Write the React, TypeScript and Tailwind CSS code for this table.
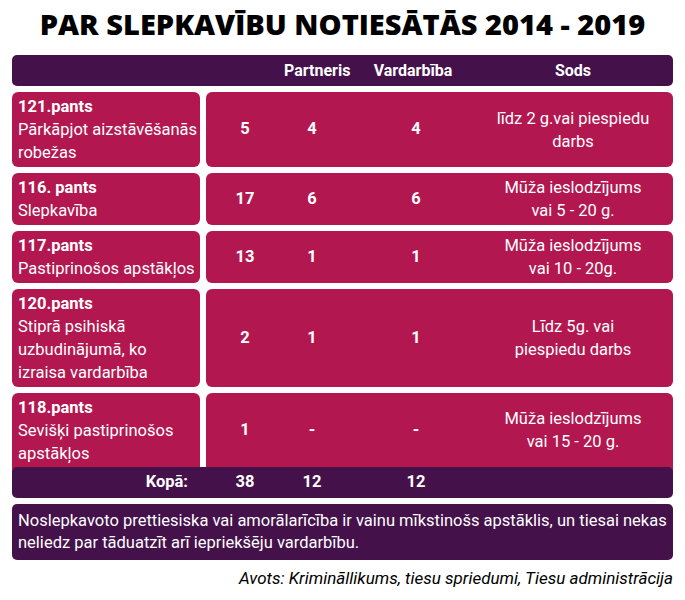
const rows = [
  {
    law: '121.pants',
    title: ['Pārkāpjot aizstāvēšanās', 'robežas'],
    total: '5',
    partner: '4',
    violence: '4',
    sentence: ['līdz 2 g.vai piespiedu', 'darbs'],
  },
  {
    law: '116. pants',
    title: ['Slepkavība'],
    total: '17',
    partner: '6',
    violence: '6',
    sentence: ['Mūža ieslodzījums', 'vai 5 - 20 g.'],
  },
  {
    law: '117.pants',
    title: ['Pastiprinošos apstākļos'],
    total: '13',
    partner: '1',
    violence: '1',
    sentence: ['Mūža ieslodzījums', 'vai 10 - 20g.'],
  },
  {
    law: '120.pants',
    title: ['Stiprā psihiskā', 'uzbudinājumā, ko', 'izraisa vardarbība'],
    total: '2',
    partner: '1',
    violence: '1',
    sentence: ['Līdz 5g. vai', 'piespiedu darbs'],
  },
  {
    law: '118.pants',
    title: ['Sevišķi pastiprinošos', 'apstākļos'],
    total: '1',
    partner: '-',
    violence: '-',
    sentence: ['Mūža ieslodzījums', 'vai 15 - 20 g.'],
  },
];

const App = () => {
  return (
    <div className="w-[685px] h-[600px] bg-white font-['Roboto',sans-serif] text-white overflow-hidden">
      {/* Title */}
      <h1 className="pt-[5px] text-center font-['Open_Sans',sans-serif] text-[29px] leading-[38px] font-extrabold text-black">
        PAR SLEPKAVĪBU NOTIESĀTĀS 2014 - 2019
      </h1>

      <div className="mt-[12px] px-[12px]">
        {/* Header */}
        <div className="grid h-[31px] grid-cols-[194px_78px_56px_152px_162px] items-center rounded-[5px] bg-[#44114b] text-[16px] font-bold">
          <div />
          <div />
          <div className="text-center">Partneris</div>
          <div className="text-center -ml-[6px]">Vardarbība</div>
          <div className="text-center">Sods</div>
        </div>

        {/* Rows */}
        <div className="mt-[6px] flex flex-col gap-[6px]">
          {rows.map((row, i) => {
            const last = i === rows.length - 1;
            return (
              <div key={row.law} className="flex gap-[6px]">
                <div
                  className={`w-[188px] bg-[#b3174f] pl-[6px] pr-[1px] pt-[3px] text-[16.5px] leading-[23px] ${
                    last ? 'rounded-t-[6px] pb-[8px]' : 'rounded-[6px] pb-[3px]'
                  }`}
                >
                  <div className="font-bold">{row.law}</div>
                  {row.title.map((t) => (
                    <div key={t}>{t}</div>
                  ))}
                </div>
                <div
                  className={`grid flex-1 grid-cols-[78px_56px_152px_162px] items-center bg-[#b3174f] text-[16.5px] ${
                    last ? 'rounded-t-[6px] pb-[6px]' : 'rounded-[6px]'
                  }`}
                >
                  <div className="text-center font-bold">{row.total}</div>
                  <div className="text-center font-bold">{row.partner}</div>
                  <div className="text-center font-bold">{row.violence}</div>
                  <div className="text-center leading-[23px]">
                    {row.sentence.map((s) => (
                      <div key={s}>{s}</div>
                    ))}
                  </div>
                </div>
              </div>
            );
          })}
        </div>

        {/* Total */}
        <div className="relative -mt-[6px] grid h-[31px] grid-cols-[194px_78px_56px_152px_162px] items-center rounded-[5px] bg-[#44114b] text-[16.5px] font-bold">
          <div className="pr-[18px] text-right">Kopā:</div>
          <div className="text-center">38</div>
          <div className="text-center">12</div>
          <div className="text-center">12</div>
          <div />
        </div>

        {/* Note */}
        <div className="mt-[6px] rounded-[5px] bg-[#44114b] px-[6px] py-[6px] text-[16.5px] leading-[22px]">
          Noslepkavoto prettiesiska vai amorālarīcība ir vainu mīkstinošs apstāklis, un tiesai nekas neliedz par
          tāduatzīt arī iepriekšēju vardarbību.
        </div>

        {/* Source */}
        <p className="mt-[8px] text-right text-[17px] leading-[20px] italic text-black">
          Avots: Krimināllikums, tiesu spriedumi, Tiesu administrācija
        </p>
      </div>
    </div>
  );
};

export default App;
